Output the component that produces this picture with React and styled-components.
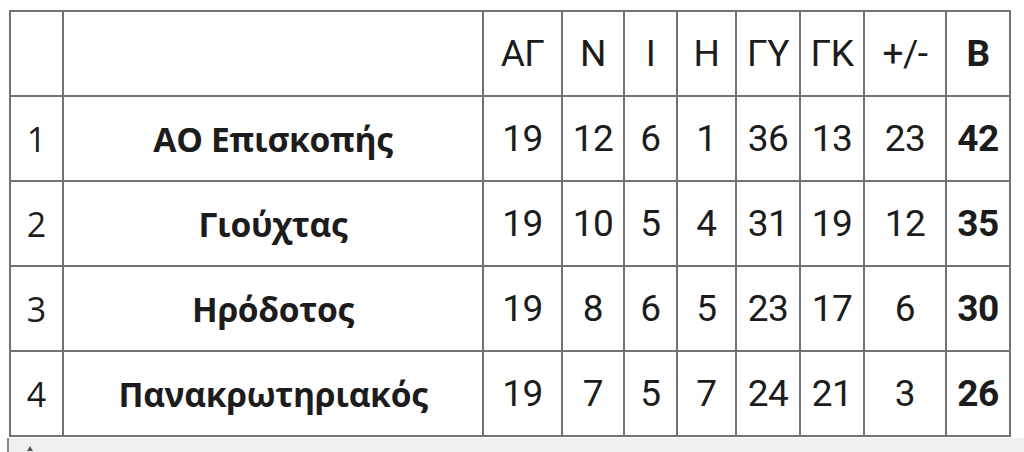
import React from 'react'
import styled, { createGlobalStyle } from 'styled-components'

const GlobalStyle = createGlobalStyle`
  html, body {
    margin: 0;
    padding: 0;
    background: #ffffff;
  }
  body {
    width: 1024px;
    height: 452px;
    overflow: hidden;
  }
`

const Page = styled.div`
  padding: 10px 0 0 0;
`

const TableWrap = styled.div`
  padding-left: 9px;
`

const Table = styled.table`
  border-collapse: collapse;
  table-layout: fixed;
  width: 1000px;
  color: #1c1c1c;
`

const Row = styled.tr`
  height: 85px;
`

const Cell = styled.td`
  border: 2px solid #727272;
  padding: 0;
  text-align: center;
  vertical-align: middle;
  font-family: Roboto, "Liberation Sans", sans-serif;
  font-size: 37px;
  font-weight: ${p => (p.bold ? 700 : 400)};
  letter-spacing: -0.5px;
`

const IndexCell = styled(Cell)`
  font-family: "Open Sans", "Noto Sans", sans-serif;
  font-size: 34px;
  letter-spacing: 0;
`

const TeamCell = styled(Cell)`
  font-family: "Open Sans", "Noto Sans", sans-serif;
  font-size: 33.6px;
  font-weight: 700;
  letter-spacing: -0.3px;
`

const Scrollbar = styled.div`
  margin-left: 7px;
  margin-top: 1px;
  height: 20px;
  background: #f0f0f0;
  border-left: 2px solid #8a8a8a;
  position: relative;
`

const Arrow = styled.span`
  position: absolute;
  left: 18px;
  top: 8px;
  width: 0;
  height: 0;
  border-left: 3px solid transparent;
  border-right: 3px solid transparent;
  border-bottom: 5px solid #555;
`

const widths = [53, 420, 79, 62, 53, 59, 64, 64, 82, 64]
const headers = ['ΑΓ', 'Ν', 'Ι', 'Η', 'ΓΥ', 'ΓΚ', '+/-', 'Β']

const teams = [
  { pos: 1, name: 'ΑΟ Επισκοπής', stats: [19, 12, 6, 1, 36, 13, 23], pts: 42 },
  { pos: 2, name: 'Γιούχτας', stats: [19, 10, 5, 4, 31, 19, 12], pts: 35 },
  { pos: 3, name: 'Ηρόδοτος', stats: [19, 8, 6, 5, 23, 17, 6], pts: 30 },
  { pos: 4, name: 'Πανακρωτηριακός', stats: [19, 7, 5, 7, 24, 21, 3], pts: 26 },
]

const App = () => (
  <>
    <GlobalStyle />
    <Page>
      <TableWrap>
        <Table>
          <colgroup>
            {widths.map((w, i) => <col key={i} style={{ width: w }} />)}
          </colgroup>
          <tbody>
            <Row>
              <IndexCell />
              <TeamCell />
              {headers.map((h, i) => (
                <Cell key={h} bold={i === headers.length - 1}>{h}</Cell>
              ))}
            </Row>
            {teams.map(t => (
              <Row key={t.pos}>
                <IndexCell>{t.pos}</IndexCell>
                <TeamCell>{t.name}</TeamCell>
                {t.stats.map((s, i) => <Cell key={i}>{s}</Cell>)}
                <Cell bold>{t.pts}</Cell>
              </Row>
            ))}
          </tbody>
        </Table>
      </TableWrap>
      <Scrollbar>
        <Arrow />
      </Scrollbar>
    </Page>
  </>
)

export default App
